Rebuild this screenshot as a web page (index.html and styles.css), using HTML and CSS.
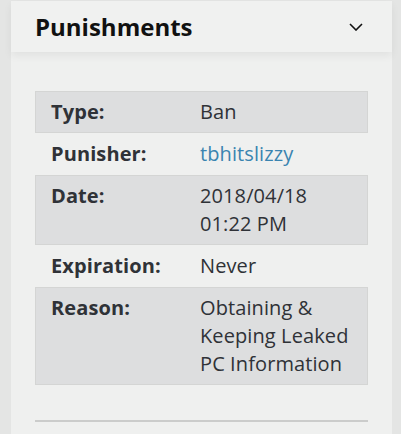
FILE: index.html
```html
<!DOCTYPE html>
<html>
<head>
    <title>Punishments</title>
    <link rel="stylesheet" href="styles.css">
</head>
<body>
    <div class="panel">
        <div class="panel-header">
            <h2>Punishments</h2>
            <svg class="chevron" width="14" height="8" viewBox="0 0 14 8">
                <path d="M1 1 L7 7 L13 1" fill="none" stroke="#111" stroke-width="1.6"/>
            </svg>
        </div>
        <div class="panel-body">
            <table class="details">
                <tr class="striped">
                    <th>Type:</th>
                    <td>Ban</td>
                </tr>
                <tr>
                    <th>Punisher:</th>
                    <td><a href="#">tbhitslizzy</a></td>
                </tr>
                <tr class="striped">
                    <th>Date:</th>
                    <td>2018/04/18<br>01:22 PM</td>
                </tr>
                <tr>
                    <th>Expiration:</th>
                    <td>Never</td>
                </tr>
                <tr class="striped">
                    <th>Reason:</th>
                    <td>Obtaining &amp; Keeping Leaked PC Information</td>
                </tr>
            </table>
            <hr class="divider">
        </div>
    </div>
</body>
</html>
```

FILE: styles.css
```css
body {
  margin: 0;
  padding: 1px 9px 0 11px;
  background-color: #e4e5e4;
  font-family: "Open Sans", sans-serif;
  color: #2f3237;
}
.panel {
  background-color: #eff0ef;
}
.panel-header {
  display: flex;
  align-items: center;
  justify-content: space-between;
  height: 51px;
  padding: 0 29px 0 24px;
  background-color: #f0f1f0;
  position: relative;
  box-shadow: 0 4px 8px rgba(0, 0, 0, 0.06);
}
.panel-header h2 {
  margin: 0;
  font-size: 24px;
  font-weight: 700;
  color: #111;
}
.chevron {
  display: block;
}
.panel-body {
  padding: 39px 24px 20px;
}
.details {
  width: 100%;
  border-collapse: collapse;
  font-size: 20px;
  line-height: 28px;
  letter-spacing: 0.1px;
}
.details th,
.details td {
  padding: 7px 16px;
  text-align: left;
  vertical-align: top;
}
.details th {
  width: 117px;
  font-weight: 700;
}
.details td {
  font-weight: 400;
}
.details tr.striped {
  background-color: #dddedf;
  outline: 1px solid #d4d5d4;
  outline-offset: -1px;
}
.details a {
  color: #3a84b0;
  text-decoration: none;
}
.divider {
  margin: 35px 0 0;
  border: 0;
  border-top: 2px solid #cbcccb;
}
```
